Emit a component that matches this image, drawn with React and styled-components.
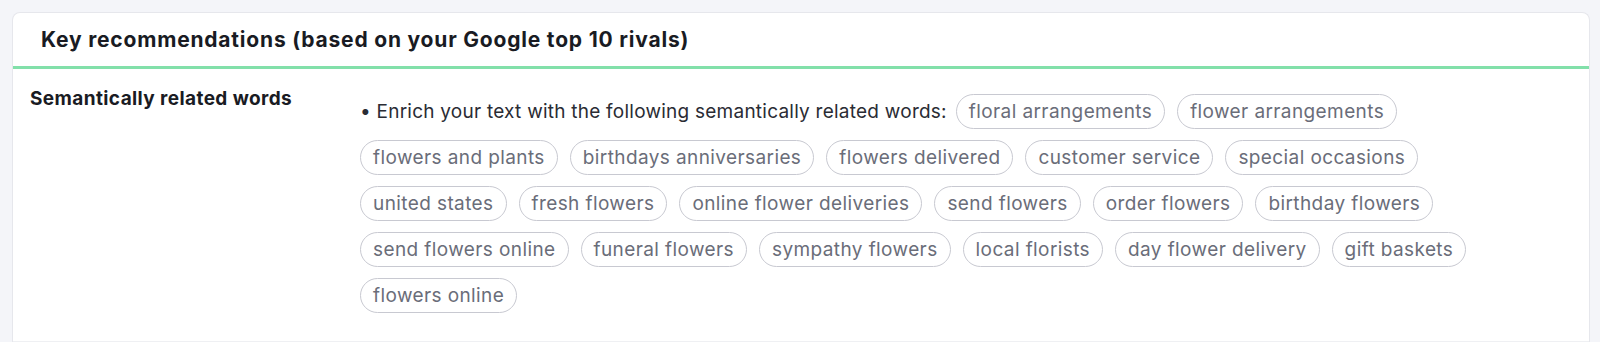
import React from "react";
import styled, { createGlobalStyle } from "styled-components";

const GlobalStyle = createGlobalStyle`
  html, body { margin: 0; padding: 0; background: #f4f5f9; }
  body { font-family: Inter, "Noto Sans", Arial, sans-serif; -webkit-font-smoothing: antialiased; }
`;

const Page = styled.div`
  padding: 12px 10px 0 12px;
`;

const Card = styled.section`
  background: #ffffff;
  border: 1px solid #e6e7ec;
  border-bottom: none;
  border-radius: 8px 8px 0 0;
  min-height: 400px;
`;

const Header = styled.header`
  height: 53px;
  display: flex;
  align-items: center;
  padding: 0 28px;
  border-bottom: 3px solid #82e0aa;
`;

const Title = styled.h2`
  margin: 0;
  font-size: 21px;
  font-weight: 700;
  color: #191b23;
  letter-spacing: 0.8px;
`;

const Row = styled.div`
  display: grid;
  grid-template-columns: 330px 1fr;
  padding: 18px 18px 28px 17px;
  border-bottom: 1px solid #eff0f3;
`;

const Label = styled.div`
  font-size: 19px;
  line-height: 24px;
  font-weight: 700;
  color: #191b23;
  letter-spacing: 0.4px;
`;

const Chips = styled.div`
  display: flex;
  flex-wrap: wrap;
  align-items: center;
  gap: 11px 12px;
  margin-top: 7px;
`;

const Lead = styled.span`
  font-size: 19px;
  line-height: 23px;
  color: #2a2c34;
  letter-spacing: 0.24px;
  margin-right: -3px;
`;

const Chip = styled.span`
  display: inline-block;
  font-size: 19px;
  line-height: 23px;
  letter-spacing: 0.4px;
  padding: 5px 12px;
  border: 1px solid #c8c9d1;
  border-radius: 18px;
  color: #6a6d79;
  white-space: nowrap;
`;

const words = [
  "floral arrangements",
  "flower arrangements",
  "flowers and plants",
  "birthdays anniversaries",
  "flowers delivered",
  "customer service",
  "special occasions",
  "united states",
  "fresh flowers",
  "online flower deliveries",
  "send flowers",
  "order flowers",
  "birthday flowers",
  "send flowers online",
  "funeral flowers",
  "sympathy flowers",
  "local florists",
  "day flower delivery",
  "gift baskets",
  "flowers online",
];

export default function App() {
  return (
    <>
      <GlobalStyle />
      <Page>
        <Card>
          <Header>
            <Title>Key recommendations (based on your Google top 10 rivals)</Title>
          </Header>
          <Row>
            <Label>Semantically related words</Label>
            <Chips>
              <Lead>• Enrich your text with the following semantically related words:</Lead>
              {words.map((w) => (
                <Chip key={w}>{w}</Chip>
              ))}
            </Chips>
          </Row>
        </Card>
      </Page>
    </>
  );
}
